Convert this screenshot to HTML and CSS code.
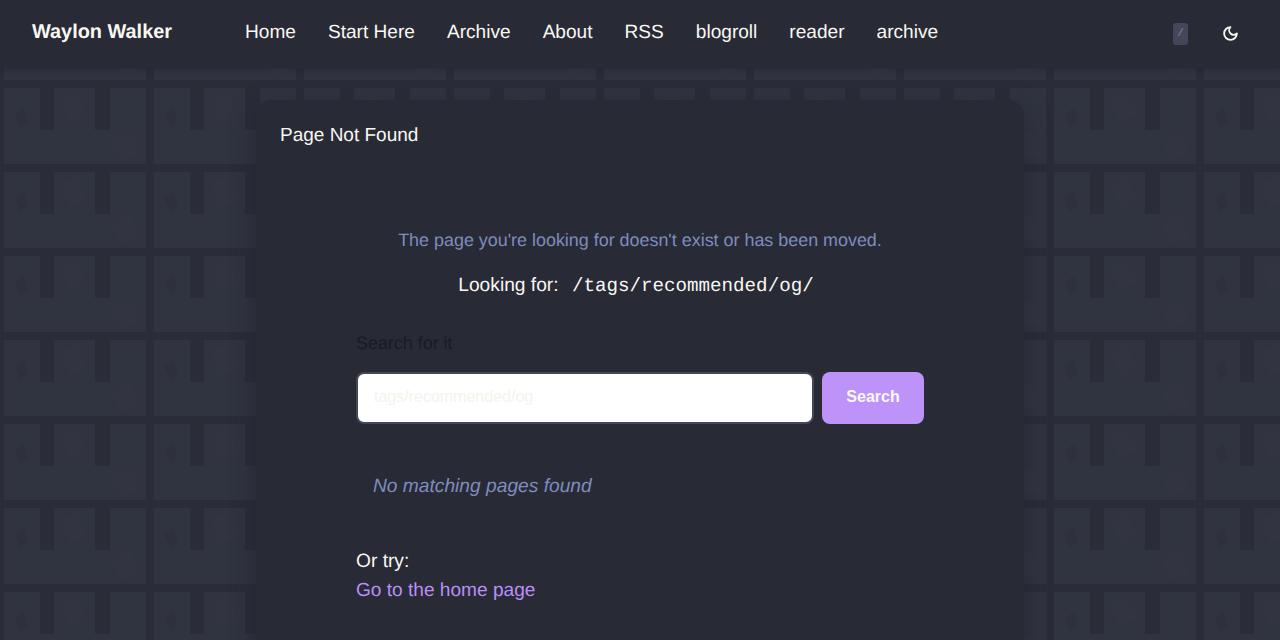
FILE: index.html
```html
<!DOCTYPE html>
<html lang="en">
<head>
  <meta charset="UTF-8" />
  <meta name="viewport" content="width=device-width, initial-scale=1.0"/>
  <title>Page Not Found - Waylon Walker</title>
  <link rel="stylesheet" href="styles.css">
</head>
<body>

<header class="site-header">
  <a class="brand" href="#">Waylon Walker</a>
  <nav class="site-nav">
    <a href="#">Home</a>
    <a href="#">Start Here</a>
    <a href="#">Archive</a>
    <a href="#">About</a>
    <a href="#">RSS</a>
    <a href="#">blogroll</a>
    <a href="#">reader</a>
    <a href="#">archive</a>
  </nav>
  <div class="header-tools">
    <kbd class="search-key">/</kbd>
    <button class="theme-toggle" aria-label="Toggle theme">
      <svg viewBox="0 0 24 24" width="17" height="17" fill="none" stroke="currentColor" stroke-width="2.6" stroke-linecap="round" stroke-linejoin="round">
        <path d="M12 3a6 6 0 0 0 9 9 9 9 0 1 1-9-9Z"/>
      </svg>
    </button>
  </div>
</header>

<main class="card">
  <h1 class="card-title">Page Not Found</h1>
  <div class="card-body">
    <p class="lead">The page you're looking for doesn't exist or has been moved.</p>
    <p class="looking">Looking for: <code>/tags/recommended/og/</code></p>

    <label class="search-label" for="search">Search for it</label>
    <div class="search-row">
      <input type="text" id="search" placeholder="tags/recommended/og"/>
      <button class="search-button">Search</button>
    </div>

    <p class="no-results">No matching pages found</p>

    <p class="or-try">Or try:</p>
    <a class="home-link" href="#">Go to the home page</a>
  </div>
</main>

</body>
</html>
```

FILE: styles.css
```css
* {
  box-sizing: border-box;
}

html, body {
  height: 100%;
}

body {
  margin: 0;
  overflow: hidden;
  font-family: 'Liberation Sans', Arial, sans-serif;
  text-rendering: geometricPrecision;
  color: #f8f8f2;
  background-color: #2a2c38;
  background-image: url("data:image/svg+xml,%3Csvg xmlns='http://www.w3.org/2000/svg' width='150' height='84'%3E%3Crect x='4' y='4' width='142' height='76' fill='%23303340'/%3E%3Crect x='40' y='4' width='14' height='42' fill='%232a2c38'/%3E%3Crect x='95' y='4' width='15' height='42' fill='%232a2c38'/%3E%3Cpath d='M62 16l14-8 10 22-16 10z' fill='%23323541'/%3E%3Cpath d='M112 58l18-12 10 24-20 6z' fill='%23323541'/%3E%3Cpath d='M14 30l10-6 4 14-8 6z' fill='%232e313d'/%3E%3C/svg%3E");
  background-position: 0 0;
}

.site-header {
  display: flex;
  align-items: center;
  height: 68px;
  padding: 0 32px;
  background: #282a36;
  box-shadow: 0 2px 6px rgba(30, 32, 42, 0.35);
}

.brand {
  width: 213px;
  margin-bottom: 3px;
  font-size: 19.9px;
  font-weight: 700;
  color: #f8f8f2;
  text-decoration: none;
}

.site-nav {
  display: flex;
  gap: 32px;
  margin-bottom: 3px;
}

.site-nav a {
  font-size: 19.1px;
  color: #f8f8f2;
  text-decoration: none;
}

.header-tools {
  display: flex;
  align-items: center;
  gap: 34px;
  margin-left: auto;
  margin-right: 9px;
}

.search-key {
  display: flex;
  align-items: center;
  justify-content: center;
  width: 15px;
  height: 22px;
  font-family: 'Liberation Mono', monospace;
  font-size: 11px;
  color: #7d8199;
  background: #44475a;
  border-radius: 3px;
}

.theme-toggle {
  display: flex;
  padding: 0 0 2px;
  color: #f8f8f2;
  background: none;
  border: none;
  cursor: pointer;
}

.card {
  width: 768px;
  height: 640px;
  margin: 32px auto 0;
  background: #282a36;
  border-radius: 16px;
  box-shadow: 0 8px 24px rgba(30, 32, 42, 0.55);
}

.card-title {
  margin: 0;
  padding: 25px 24px 0;
  font-size: 19px;
  font-weight: 400;
  line-height: 22px;
}

.card-body {
  display: flex;
  flex-direction: column;
  width: 568px;
  margin: 0 auto;
  padding-top: 81px;
}

.lead {
  margin: 0;
  font-size: 17.92px;
  line-height: 24px;
  text-align: center;
  color: #7f8cbd;
}

.looking {
  margin: 22px 0 0;
  font-size: 19.2px;
  line-height: 24px;
  text-align: center;
}

.looking code {
  padding: 0 8px;
  font-family: 'Liberation Mono', monospace;
  font-size: 19.2px;
}

.search-label {
  margin-top: 33px;
  font-size: 17.92px;
  line-height: 24px;
  color: #191b25;
}

.search-row {
  display: flex;
  gap: 8px;
  margin-top: 17px;
}

.search-row input {
  flex: 1;
  height: 52px;
  padding: 0 16px 2px;
  font-family: inherit;
  font-size: 16px;
  background: #fff;
  border: 2px solid #44475a;
  border-radius: 8px;
}

.search-row input::placeholder {
  color: #f4f4ee;
  opacity: 1;
}

.search-button {
  width: 102px;
  height: 52px;
  padding: 0 0 2px;
  font-family: inherit;
  font-size: 16px;
  font-weight: 700;
  color: #f8f8f2;
  background: #bd93f9;
  border: none;
  border-radius: 8px;
  cursor: pointer;
}

.no-results {
  margin: 51px 0 0;
  padding-left: 17px;
  font-size: 19.2px;
  font-style: italic;
  line-height: 24px;
  color: #7f8cbd;
}

.or-try {
  margin: 48px 0 0;
  font-size: 19.2px;
  line-height: 29px;
}

.home-link {
  font-size: 19.1px;
  line-height: 29px;
  color: #b98ff5;
  text-decoration: none;
}
```
